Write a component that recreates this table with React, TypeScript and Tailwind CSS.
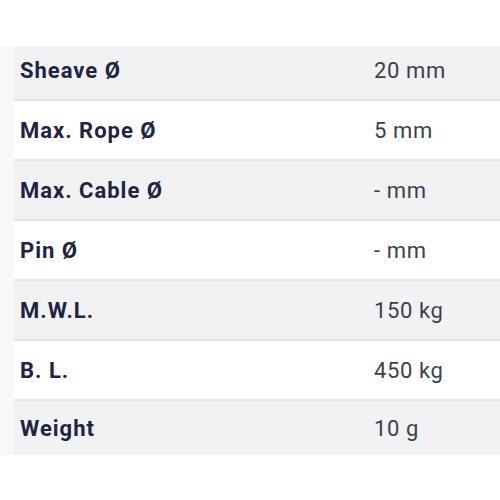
const specs = [
  { label: 'Sheave Ø', value: '20 mm' },
  { label: 'Max. Rope Ø', value: '5 mm' },
  { label: 'Max. Cable Ø', value: '- mm' },
  { label: 'Pin Ø', value: '- mm' },
  { label: 'M.W.L.', value: '150 kg' },
  { label: 'B. L.', value: '450 kg' },
  { label: 'Weight', value: '10 g' },
];

export default function App() {
  return (
    <div className="w-[500px] h-[500px] bg-white pt-[46px]" style={{ fontFamily: 'Roboto, "Noto Sans", sans-serif' }}>
      <div className="flex">
        <div className="w-[14px] bg-[#f8f8fa]" />
        <div className="flex-1 flex flex-col">
          {specs.map((row, i) => {
            const first = i === 0;
            const last = i === specs.length - 1;
            return (
              <div
                key={row.label}
                className={
                  'flex items-center text-[22px] ' +
                  (i % 2 === 0 ? 'bg-[#f2f2f5] ' : 'bg-white ') +
                  (last ? 'h-[54px] pb-[2px] ' : 'border-b-2 border-[#e6e6ea] ') +
                  (first ? 'h-[55px] pb-[4px]' : !last ? 'h-[60px]' : 'pt-[2px]')
                }
              >
                <div className="w-[360px] pl-[6px] font-bold tracking-[1px] text-[#1f2344]">{row.label}</div>
                <div className="flex-1 tracking-[0.6px] text-[#3c404c]">{row.value}</div>
              </div>
            );
          })}
        </div>
      </div>
    </div>
  );
}
